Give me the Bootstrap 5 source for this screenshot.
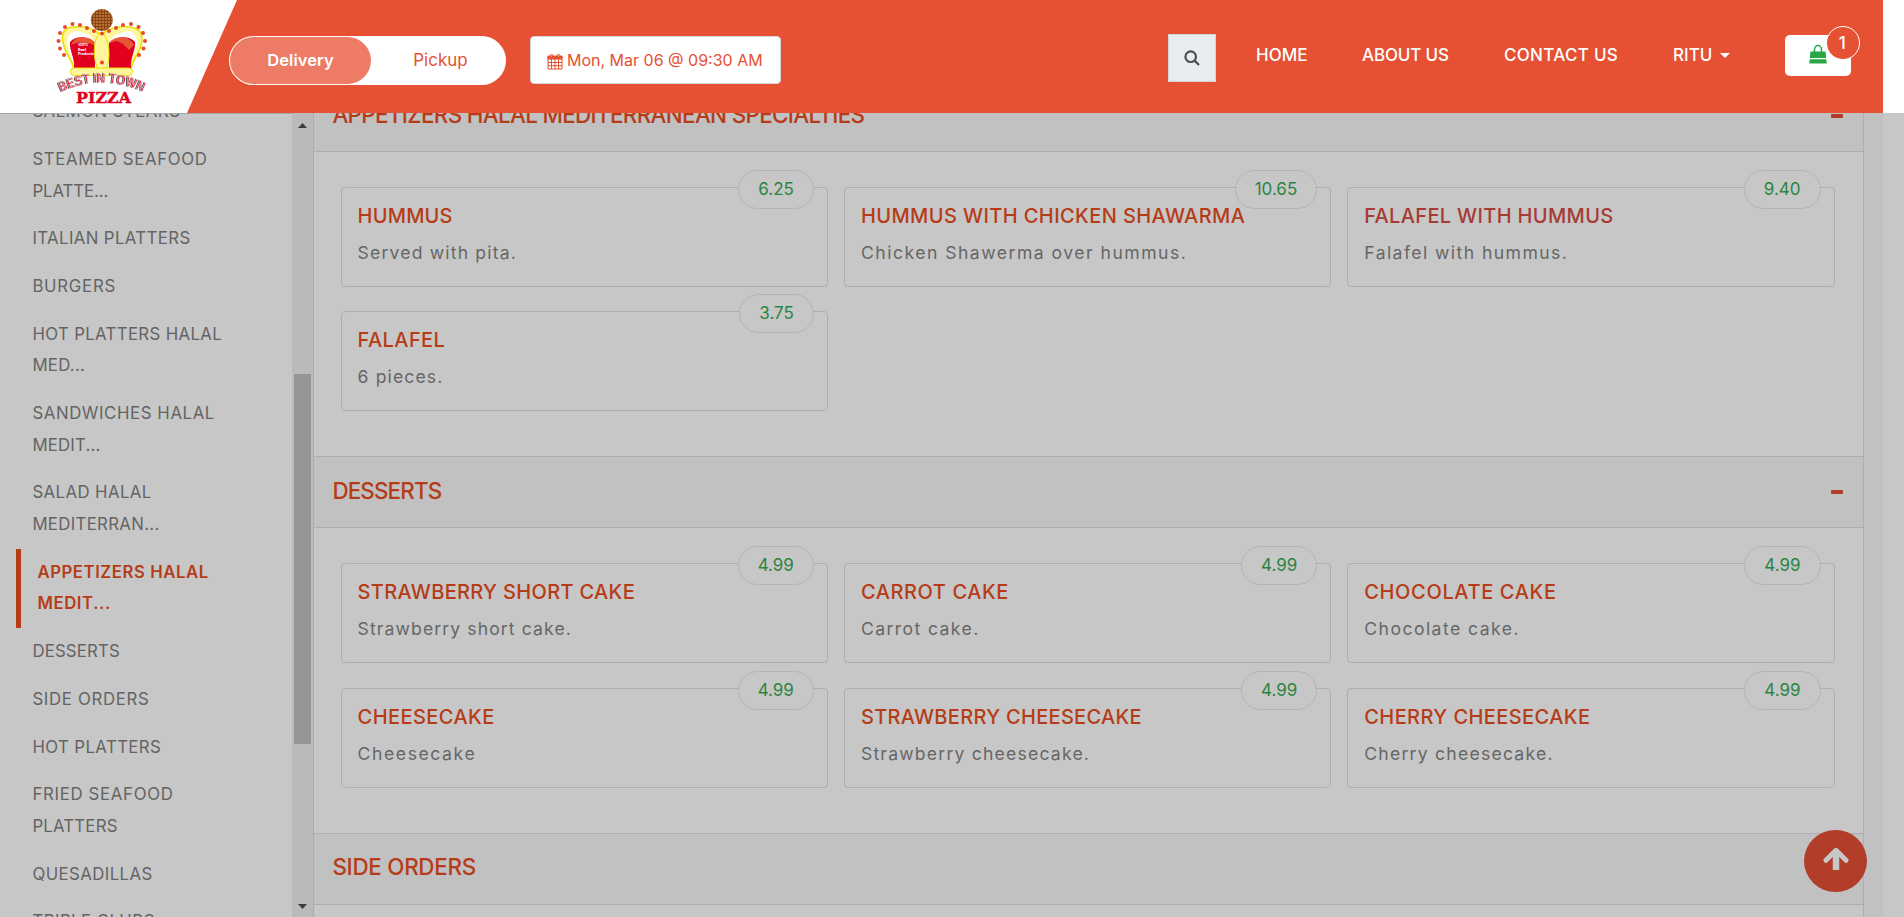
<!DOCTYPE html>
<html lang="en">
<head>
<meta charset="utf-8">
<title>Best In Town Pizza</title>
<link href="https://cdn.jsdelivr.net/npm/bootstrap@5.3.0/dist/css/bootstrap.min.css" rel="stylesheet">
<style>
  :root{--brand:#e55132;--dim-brand:#b63c18;--dim-bg:#c7c7c7;--dim-head:#c1c1c1;--dim-line:#adadad;}
  body{font-family:Inter,sans-serif;font-size:17.6px;background:var(--dim-bg);height:917px;overflow:hidden;white-space:nowrap}
  .topbar{height:113px;background:#fff}
  .topbar-fill{width:1883px;background:var(--brand)}
  .logo-panel{width:237px;background:#fff;clip-path:polygon(0 0,100% 0,187px 100%,0 100%)}
  .switcher{width:277px;height:49px;margin:36px 24px 0 -8px;border-radius:25px;background:#fff;padding:1px}
  .switcher span{width:141px;font-size:17px;border-radius:24px;color:var(--brand)}
  .switcher span.on{background:#ed7b66;color:#fff;font-weight:600;font-size:16.6px}
  .switcher span:last-child{width:134px;padding-left:5px}
  .datebox{width:251px;height:48px;margin-top:36px;border:1px solid #ced4da;border-radius:4px;color:var(--brand);font-size:16px;padding:0 16px 1px;background:#fff}
  .searchbtn{width:48px;height:48px;margin-top:34px;margin-left:387px;background:#e9ecef;border:1px solid #ced4da}
  .topnav{margin-top:39px;color:#fff;font-weight:500;font-size:17px;line-height:32px;height:32px}
  .topnav .home{margin-left:40px;width:106px}
  .topnav .about{width:142px;letter-spacing:-.15px}
  .topnav .contact{width:169px;letter-spacing:.3px}
  .caret{border:5px solid transparent;border-top-color:#fff;border-bottom:0;margin-left:8px}
  .cart{width:66px;height:41px;margin-top:35px;margin-left:55px;background:#fff;border-radius:5px}
  .cart svg{margin-left:23px;margin-top:9px}
  .cart b{position:absolute;right:-9px;top:-9px;width:34px;height:34px;border:1px solid #fff;border-radius:50%;background:var(--brand);color:#fff;font-weight:500;font-size:17px;line-height:32px;text-align:center;padding-right:2px}
  .page-body{height:804px}
  .cats{width:292px;border-top:1px solid #a3a5a5;padding-left:16px}
  .cats ul{margin-top:-25.800px}
  .cats li{padding:8px 0 8px 16.400px;line-height:31.680px;font-size:16.800px;color:#646464}
  .cats li.current{color:var(--dim-brand);font-weight:600;border-left:5px solid var(--dim-brand)}
  .scroller{width:21px;background:#bababa}
  .scroller .thumb{width:17px;height:370px;margin-top:246px;background:#969696}
  .scroller .up{margin-top:10px}
  .scroller .down{margin-top:160px}
  .menu{width:1551px;border:1px solid var(--dim-line);border-width:0 1px}
  .menu-inner{margin-top:-33px}
  .gutter-r{width:19px;background:var(--dim-head)}
  .sec-head{height:72px;background:var(--dim-head);border:1px solid var(--dim-line);border-width:1px 0;padding:0 20px 0 18.400px}
  .sec-head h2{font-size:22.400px;font-weight:500;color:var(--dim-brand);margin:0 0 2px}
  .sec-head i{width:12px;height:4px;background:#b63c28;border-radius:1px}
  .sec-body{height:304.400px;padding:35px 28.400px 0 26.600px}
  .dish-row{--bs-gutter-x:16px;--bs-gutter-y:24.400px}
  .dish{height:100px;border:1px solid var(--dim-line);border-radius:4px;padding:0 16px}
  .dish h3{font-size:20px;line-height:24px;font-weight:500;color:var(--dim-brand);margin:16px 0 0}
  .dish.visited h3{color:#a63b34}
  .dish p{font-size:17.600px;line-height:26px;color:#666;margin:12px 0 0}
  .price{right:13px;top:-18px;height:39px;line-height:36px;padding:0 19px;border:1px solid #b2b4b5;border-radius:20px;background:var(--dim-bg);color:#2c8443;font-size:17px}
  .totop{right:37px;bottom:25px;width:63px;height:62px;border-radius:50%;background:#b23d28}
</style>
</head>
<body>
<header class="topbar">
  <div class="topbar-fill d-flex h-100">
    <div class="logo-panel flex-shrink-0">
      <svg width="187" height="113" viewBox="0 0 187 113">
        <defs>
          <pattern id="crust" width="3" height="3" patternUnits="userSpaceOnUse"><rect width="3" height="3" fill="#8a4217"/><circle cx="1" cy="1" r=".9" fill="#d08a3c"/></pattern>
          <path id="arch" d="M61 92 Q102 73 144 92"/>
        </defs>
        <circle cx="101.800" cy="20" r="11" fill="url(#crust)"/>
        <path d="M74 70C72 58 66 56 64 46 60 34 64 27 74 27 86 25 94 29 101 35 108 29 118 25 130 27 140 28 144 34 141 46 138 57 132 58 131 70Z" fill="#fff69b" stroke="#e6e000" stroke-width="1.600"/>
        <path d="M74 68C73 55 66 51 67 41 68 30 77 30 84 33 93 35 96 42 96 48V68Z M130 68C131 55 138 51 137 41 136 30 127 30 121 33 111 35 108 42 108 48V68Z" fill="#fff"/>
        <path d="M74 68C75 58 69 50 70 42 75 35 90 36 95 43V68Z M131 68C130 58 136 50 135 42 130 35 115 36 109 43V68Z" fill="#e1001e"/>
        <path d="M71 45C75 34 91 36 95 43V46L90 43 86 45 79 42Z M134 45C129 34 114 36 109 43L117 41 123 44 129 50Z" fill="#e65736"/>
        <path d="M101.500 32C92 38 93 59 98 70H106C111 59 110 38 101.500 32Z" fill="#fff69b" stroke="#e6e000"/>
        <rect x="70.500" y="68" width="62" height="7.500" rx="3.700" fill="#fff69b" stroke="#e6e000"/>
        <g fill="#e54a2b"><circle cx="64" cy="55" r="2"/><circle cx="60" cy="48.500" r="2"/><circle cx="58.500" cy="41" r="2"/><circle cx="60" cy="33" r="2"/><circle cx="65" cy="27" r="2"/><circle cx="72.500" cy="24" r="2"/><circle cx="80" cy="25" r="2"/><circle cx="87" cy="28" r="2"/><circle cx="94" cy="31" r="2"/><circle cx="102" cy="33.500" r="2"/><circle cx="109" cy="31" r="2"/><circle cx="116" cy="28" r="2"/><circle cx="123" cy="25" r="2"/><circle cx="131" cy="24" r="2"/><circle cx="138.500" cy="27" r="2"/><circle cx="143" cy="33" r="2"/><circle cx="145" cy="41" r="2"/><circle cx="143.500" cy="48.500" r="2"/><circle cx="139" cy="55" r="2"/><circle cx="102" cy="62.500" r="2"/></g>
        <g fill="#fff" font-family="Inter,sans-serif" font-size="3.600" font-weight="700"><text x="78" y="46">100%</text><text x="78" y="50.700">Beef</text><text x="78" y="55.400">Products</text></g>
        <text font-family="'Liberation Sans',sans-serif" font-weight="700" font-size="13.500" fill="#e8304a" stroke="#fff" stroke-width=".4" style="filter:drop-shadow(-1px .6px 0 #444)"><textPath href="#arch" textLength="85" lengthAdjust="spacingAndGlyphs">BEST IN TOWN</textPath></text>
        <text x="76" y="102.500" font-family="'DejaVu Serif',serif" font-weight="700" font-size="14.500" fill="#e1001e" stroke="#e1001e" stroke-width=".4" textLength="55" lengthAdjust="spacingAndGlyphs">PIZZA</text>
      </svg>
    </div>
    <div class="switcher d-flex flex-shrink-0">
      <span class="on d-flex align-items-center justify-content-center">Delivery</span><span class="d-flex align-items-center justify-content-center">Pickup</span>
    </div>
    <div class="datebox d-flex align-items-center flex-shrink-0">
      <svg width="16" height="17" viewBox="0 0 16 17" class="me-1 mt-1 flex-shrink-0" fill="none" stroke="#e55132"><path d="M1 3.500h14V16H1zM1 9.500h14M1 12.700h14M4.500 6v10M8 6v10M11.500 6v10" stroke-width="1"/><path d="M1 3h14v3H1z" fill="#e55132"/><path d="M4.500 1v3M11.500 1v3" stroke-width="2.200"/><path d="M4.500 1v3M11.500 1v3" stroke="#f6c08c" stroke-width=".7"/></svg>
      <span>Mon, Mar 06 @ 09:30 AM</span>
    </div>
    <div class="searchbtn d-flex align-items-center justify-content-center flex-shrink-0">
      <svg width="16" height="16" viewBox="0 0 16 16" fill="none" stroke="#495057" stroke-width="2.200"><circle cx="6.700" cy="6.700" r="5.300"/><path d="M10.600 10.600 15 15"/></svg>
    </div>
    <nav class="topnav d-flex">
      <span class="home">HOME</span><span class="about">ABOUT US</span><span class="contact">CONTACT US</span><span class="d-flex align-items-center">RITU<i class="caret"></i></span>
    </nav>
    <div class="cart position-relative flex-shrink-0">
      <svg width="20" height="21" viewBox="0 0 20 21"><path d="M2.500 7.500h15l.7 6.500H1.800zM1.700 15.200h16.600l.4 4.300H1.300z" fill="#28a745"/><path d="M6.500 10V5.500a3.500 4 0 0 1 7 0V10" fill="none" stroke="#28a745" stroke-width="1.500"/></svg>
      <b>1</b>
    </div>
  </div>
</header>

<main class="page-body d-flex overflow-hidden">
  <aside class="cats flex-shrink-0 overflow-hidden"><ul class="list-unstyled mb-0" id="cats"></ul></aside>
  <div class="scroller d-flex flex-column align-items-center flex-shrink-0">
    <svg class="up flex-shrink-0" width="9" height="5"><path d="M0 5 4.500 0 9 5z" fill="#3c3c3c"/></svg>
    <div class="thumb flex-shrink-0"></div>
    <svg class="down flex-shrink-0" width="9" height="5"><path d="M0 0 4.500 5 9 0z" fill="#3c3c3c"/></svg>
  </div>
  <section class="menu flex-shrink-0"><div class="menu-inner" id="menu"></div></section>
  <div class="gutter-r flex-shrink-0"></div>
</main>

<a class="totop position-fixed d-flex align-items-center justify-content-center">
  <svg width="26" height="24" viewBox="0 0 26 24" fill="none" stroke="#c7c7c7" stroke-linejoin="round" class="mb-1"><path d="M13 23V4" stroke-width="6.500"/><path d="M3 13.300 13 3.300 23 13.300" stroke-width="5" stroke-linecap="round"/></svg>
</a>

<script src="https://cdn.jsdelivr.net/npm/bootstrap@5.3.0/dist/js/bootstrap.bundle.min.js"></script>
<script>
  // Every label is [text, tracking in px]
  const t = ([text, ls]) => `<span style="letter-spacing:${ls}px">${text}</span>`;
  const cats = [
    [['SALMON STEAKS', .45]],
    [['STEAMED SEAFOOD', .64], ['PLATTE...', -.08]],
    [['ITALIAN PLATTERS', .38]],
    [['BURGERS', .73]],
    [['HOT PLATTERS HALAL', .35], ['MED...', .26]],
    [['SANDWICHES HALAL', .59], ['MEDIT...', .19]],
    [['SALAD HALAL', .41], ['MEDITERRAN...', .32]],
    [['APPETIZERS HALAL', .54], ['MEDIT...', .57]],
    [['DESSERTS', .17]],
    [['SIDE ORDERS', .68]],
    [['HOT PLATTERS', .4]],
    [['FRIED SEAFOOD', .68], ['PLATTERS', .19]],
    [['QUESADILLAS', .42]],
    [['TRIPLE CLUBS', .45]]
  ];
  document.getElementById('cats').innerHTML = cats.map((c, i) =>
    `<li class="${i === 7 ? 'current' : ''}">${c.map(t).join('<br>')}</li>`).join('');

  const sections = [
    { head: ['APPETIZERS HALAL MEDITERRANEAN SPECIALTIES', -.66], open: true, dishes: [
      [['HUMMUS', .2], ['Served with pita.', 1.17], '6.25'],
      [['HUMMUS WITH CHICKEN SHAWARMA', .4], ['Chicken Shawerma over hummus.', 1.48], '10.65'],
      [['FALAFEL WITH HUMMUS', .34], ['Falafel with hummus.', 1.42], '9.40', 'visited'],
      [['FALAFEL', .42], ['6 pieces.', 1.1], '3.75']] },
    { head: ['DESSERTS', -.85], open: true, dishes: [
      [['STRAWBERRY SHORT CAKE', .33], ['Strawberry short cake.', 1.1], '4.99'],
      [['CARROT CAKE', .58], ['Carrot cake.', 1.4], '4.99'],
      [['CHOCOLATE CAKE', .65], ['Chocolate cake.', 1.45], '4.99'],
      [['CHEESECAKE', .42], ['Cheesecake', 1.57], '4.99'],
      [['STRAWBERRY CHEESECAKE', .3], ['Strawberry cheesecake.', 1.2], '4.99'],
      [['CHERRY CHEESECAKE', .41], ['Cherry cheesecake.', 1.23], '4.99']] },
    { head: ['SIDE ORDERS', -.27], open: false, dishes: [] }
  ];
  document.getElementById('menu').innerHTML = sections.map(s => `
    <div class="sec-head d-flex align-items-center justify-content-between"><h2>${t(s.head)}</h2>${s.open ? '<i></i>' : ''}</div>
    <div class="sec-body"><div class="row row-cols-3 dish-row">${s.dishes.map(([n, d, p, c = '']) => `
      <div class="col"><div class="dish position-relative ${c}"><span class="price position-absolute">${p}</span><h3>${t(n)}</h3><p>${t(d)}</p></div></div>`).join('')}</div></div>`).join('');
</script>
</body>
</html>
